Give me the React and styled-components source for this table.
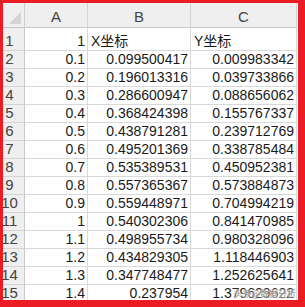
import styled, { createGlobalStyle } from 'styled-components';

const GlobalStyle = createGlobalStyle`
  html, body {
    margin: 0;
    padding: 0;
    background: #ffffff;
  }
`;

const rows = [
  ['1', 'X坐标', 'Y坐标'],
  ['0.1', '0.099500417', '0.009983342'],
  ['0.2', '0.196013316', '0.039733866'],
  ['0.3', '0.286600947', '0.088656062'],
  ['0.4', '0.368424398', '0.155767337'],
  ['0.5', '0.438791281', '0.239712769'],
  ['0.6', '0.495201369', '0.338785484'],
  ['0.7', '0.535389531', '0.450952381'],
  ['0.8', '0.557365367', '0.573884873'],
  ['0.9', '0.559448971', '0.704994219'],
  ['1', '0.540302306', '0.841470985'],
  ['1.1', '0.498955734', '0.980328096'],
  ['1.2', '0.434829305', '1.118446903'],
  ['1.3', '0.347748477', '1.252625641'],
  ['1.4', '0.237954', '1.379629622'],
];

const isText = (v) => isNaN(Number(v));

const App = () => {
  return (
    <>
      <GlobalStyle />
      <Frame>
        <Sheet>
          <Corner>
            <svg width="12" height="12" viewBox="0 0 12 12">
              <polygon points="12,0 12,12 0,12" fill="#d4d4d4" />
            </svg>
          </Corner>
          <ColHead>A</ColHead>
          <ColHead>B</ColHead>
          <ColHead>C</ColHead>
          {rows.map((row, i) => (
            <Row key={i}>
              <RowHead>{i + 1}</RowHead>
              {row.map((v, j) => (
                <Cell key={j} $left={isText(v)}>
                  {v}
                </Cell>
              ))}
            </Row>
          ))}
        </Sheet>
        <Watermark>头条@数据分析</Watermark>
      </Frame>
    </>
  );
};

const Frame = styled.div`
  position: relative;
  width: 305px;
  height: 307px;
  box-sizing: border-box;
  border-style: solid;
  border-color: #ec1c24;
  border-width: 3px 7px 7px 3px;
  overflow: hidden;
  background: #ffffff;
`;

const Sheet = styled.div`
  display: grid;
  grid-template-columns: 30px 63px 103px 106px;
  grid-template-rows: 25px 23px;
  grid-auto-rows: 18px;
  margin-left: -8px;
  font-family: 'Liberation Sans', 'Noto Sans CJK SC', sans-serif;
  font-size: 14px;
  line-height: 16px;
`;

const Row = styled.div`
  display: contents;
`;

const Corner = styled.div`
  box-sizing: border-box;
  display: flex;
  justify-content: flex-end;
  align-items: flex-end;
  padding: 0 3px 3px 0;
  background: #efefef;
  border-right: 1px solid #d0d0d0;
  border-bottom: 1px solid #c8c8c8;
`;

const ColHead = styled.div`
  box-sizing: border-box;
  display: flex;
  justify-content: center;
  align-items: flex-end;
  padding-bottom: 2px;
  background: #efefef;
  color: #444444;
  font-size: 15px;
  border-right: 1px solid #d4d4d4;
  border-bottom: 1px solid #c8c8c8;
`;

const RowHead = styled.div`
  box-sizing: border-box;
  display: flex;
  justify-content: center;
  align-items: flex-end;
  padding-bottom: 1px;
  background: #efefef;
  color: #444444;
  font-size: 15px;
  border-right: 1px solid #c8c8c8;
  border-bottom: 1px solid #d4d4d4;
`;

const Cell = styled.div`
  box-sizing: border-box;
  display: flex;
  justify-content: ${(p) => (p.$left ? 'flex-start' : 'flex-end')};
  align-items: flex-end;
  padding: 0 2px 1px 3px;
  color: #1a1a1a;
  white-space: nowrap;
  border-right: 1px solid #d9d9d9;
  border-bottom: 1px solid #d9d9d9;
`;

const Watermark = styled.div`
  position: absolute;
  right: 2px;
  bottom: 1px;
  font-family: 'Noto Sans CJK SC', sans-serif;
  font-size: 9px;
  line-height: 11px;
  color: rgba(110, 110, 110, 0.8);
  text-shadow: 0 0 2px #ffffff, 0 0 1px #ffffff;
`;

export default App;
